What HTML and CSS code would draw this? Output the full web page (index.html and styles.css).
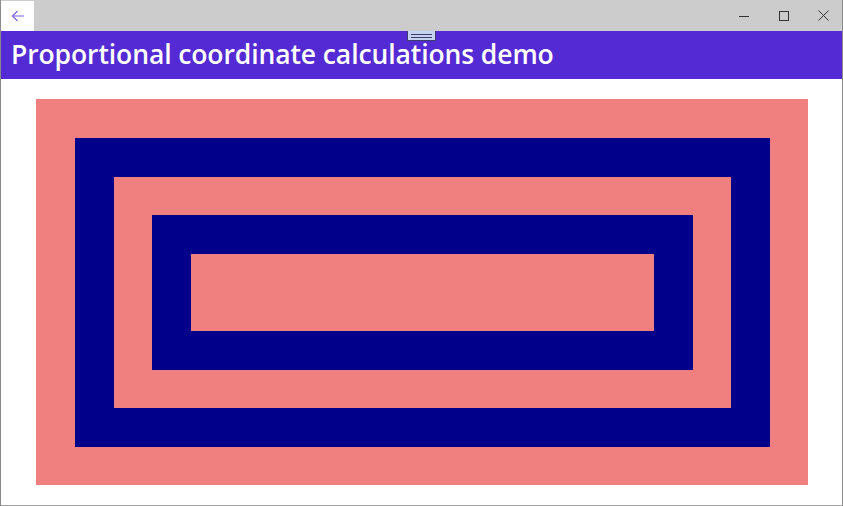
FILE: index.html
```html
<!DOCTYPE html>
<html>
<head>
<meta charset="utf-8">
<link rel="stylesheet" href="styles.css">
</head>
<body>
<div class="window">
  <div class="titlebar">
    <div class="back">
      <svg width="14" height="12" viewBox="0 0 14 12"><path d="M13 6H1.5M6.5 1L1.5 6l5 5" fill="none" stroke="#7a5ce0" stroke-width="1.1"/></svg>
    </div>
    <div class="spacer"></div>
    <div class="ctrl">
      <svg width="10" height="10" viewBox="0 0 10 10"><path d="M0 5.5h10" stroke="#333" stroke-width="1"/></svg>
    </div>
    <div class="ctrl">
      <svg width="10" height="10" viewBox="0 0 10 10"><rect x="0.5" y="0.5" width="9" height="9" fill="none" stroke="#333" stroke-width="1"/></svg>
    </div>
    <div class="ctrl">
      <svg width="11" height="11" viewBox="0 0 11 11"><path d="M0.5 0.5l10 10M10.5 0.5l-10 10" stroke="#333" stroke-width="1"/></svg>
    </div>
  </div>
  <div class="header">
    <h1 class="title">Proportional coordinate calculations demo</h1>
    <div class="handle"><span></span><span></span></div>
  </div>
  <div class="content">
    <div class="box pink l1">
      <div class="box navy l2">
        <div class="box pink l3">
          <div class="box navy l4">
            <div class="box pink"></div>
          </div>
        </div>
      </div>
    </div>
  </div>
</div>
</body>
</html>
```
FILE: styles.css
```css
html, body {
  margin: 0;
  padding: 0;
  background: #ffffff;
}
.window {
  width: 843px;
  height: 506px;
  box-sizing: border-box;
  border-left: 1px solid #8a8a8a;
  border-right: 1px solid #8a8a8a;
  border-bottom: 1px solid #a0a0a0;
  display: flex;
  flex-direction: column;
  overflow: hidden;
  font-family: "Open Sans", "Noto Sans", sans-serif;
}
.titlebar {
  height: 31px;
  background: #cccccc;
  display: flex;
  align-items: stretch;
  flex: none;
}
.back {
  width: 33px;
  margin-top: 1px;
  background: #ffffff;
  display: flex;
  align-items: center;
  justify-content: center;
}
.spacer {
  flex: 1;
}
.ctrl {
  width: 40px;
  display: flex;
  align-items: center;
  justify-content: center;
}
.ctrl:last-child {
  width: 38px;
}
.header {
  position: relative;
  height: 48px;
  background: #532ad3;
  display: flex;
  align-items: center;
  flex: none;
}
.title {
  margin: 0 0 2px 10px;
  color: #ffffff;
  font-size: 26.5px;
  font-weight: 600;
  letter-spacing: -0.1px;
}
.handle {
  position: absolute;
  left: 406px;
  top: 0;
  width: 27px;
  height: 9px;
  background: #c5d3f0;
  border: 1px solid #3b3f6a;
  border-top: none;
  box-sizing: content-box;
  display: flex;
  flex-direction: column;
  justify-content: center;
  align-items: center;
  gap: 2px;
}
.handle span {
  display: block;
  width: 21px;
  height: 1px;
  background: #3b3f6a;
}
.content {
  flex: 1;
  padding: 20px 0 0 35px;
}
.box {
  box-sizing: border-box;
  width: 100%;
  height: 100%;
}
.content > .box {
  width: 772px;
  height: 386px;
}
.l1 {
  padding: 39px 38px 38px 39px;
}
.l2 {
  padding: 39px;
}
.l3 {
  padding: 38px;
}
.l4 {
  padding: 39px;
}
.pink {
  background: #f08080;
}
.navy {
  background: #00008b;
}
```
